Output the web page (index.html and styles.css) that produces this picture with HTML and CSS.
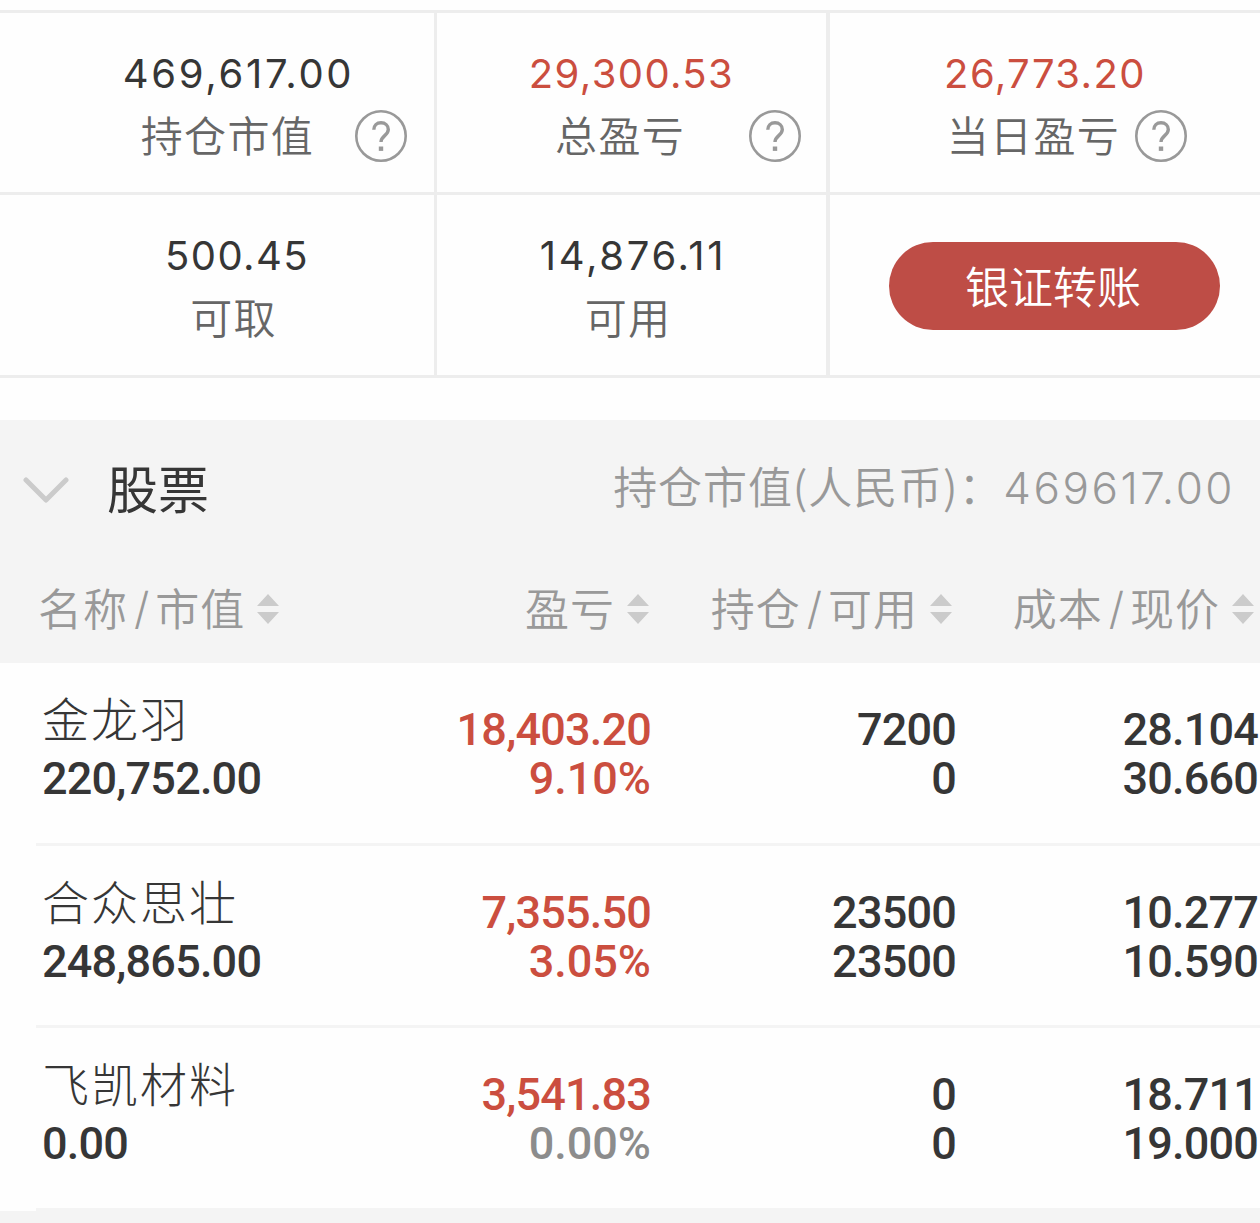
FILE: index.html
```html
<!DOCTYPE html>
<html lang="zh-CN">
  <head>
    <meta charset="UTF-8" />
    <title>持仓</title>

    <link rel="stylesheet" href="styles.css">
  </head>
  <body>
    <!-- account summary -->
    <div class="summary">
      <div class="cell cell-first">
        <div class="amount wide">469,617.00</div>
        <div class="label has-help">
          <span>持仓市值</span>
          <svg class="help" viewBox="0 0 52 52">
            <circle cx="26" cy="26" r="24.7" />
            <path d="M18.8 19.8c0-4 3-7 7.2-7s7.3 2.8 7.3 6.7c0 6-7.3 6.3-7.3 12.5" />
            <rect x="23.8" y="36.5" width="4.4" height="4.4" />
          </svg>
        </div>
      </div>
      <div class="cell cell-middle">
        <div class="amount red">29,300.53</div>
        <div class="label has-help">
          <span>总盈亏</span>
          <svg class="help" viewBox="0 0 52 52">
            <circle cx="26" cy="26" r="24.7" />
            <path d="M18.8 19.8c0-4 3-7 7.2-7s7.3 2.8 7.3 6.7c0 6-7.3 6.3-7.3 12.5" />
            <rect x="23.8" y="36.5" width="4.4" height="4.4" />
          </svg>
        </div>
      </div>
      <div class="cell cell-last">
        <div class="amount red">26,773.20</div>
        <div class="label has-help">
          <span>当日盈亏</span>
          <svg class="help" viewBox="0 0 52 52">
            <circle cx="26" cy="26" r="24.7" />
            <path d="M18.8 19.8c0-4 3-7 7.2-7s7.3 2.8 7.3 6.7c0 6-7.3 6.3-7.3 12.5" />
            <rect x="23.8" y="36.5" width="4.4" height="4.4" />
          </svg>
        </div>
      </div>
      <div class="cell cell-first">
        <div class="amount">500.45</div>
        <div class="label">可取</div>
      </div>
      <div class="cell cell-middle">
        <div class="amount wide">14,876.11</div>
        <div class="label">可用</div>
      </div>
      <div class="cell cell-last cell-button">
        <button class="transfer">银证转账</button>
      </div>
    </div>

    <!-- stock list -->
    <div class="stock-head">
      <div class="title-row">
        <svg class="arrow" viewBox="0 0 46 28">
          <path d="M3 3L23 23L43 3" />
        </svg>
        <h2>股票</h2>
        <div class="total">持仓市值(人民币)：<span class="total-num">469617.00</span></div>
      </div>
      <div class="columns">
        <div class="col">名称<i>/</i>市值<svg class="sort" viewBox="0 0 22 30"><path d="M0 12L11 0L22 12zM0 18L11 30L22 18z" /></svg></div>
        <div class="col">盈亏<svg class="sort" viewBox="0 0 22 30"><path d="M0 12L11 0L22 12zM0 18L11 30L22 18z" /></svg></div>
        <div class="col">持仓<i>/</i>可用<svg class="sort" viewBox="0 0 22 30"><path d="M0 12L11 0L22 12zM0 18L11 30L22 18z" /></svg></div>
        <div class="col">成本<i>/</i>现价<svg class="sort" viewBox="0 0 22 30"><path d="M0 12L11 0L22 12zM0 18L11 30L22 18z" /></svg></div>
      </div>
    </div>

    <div class="stocks">
      <div class="stock">
        <div class="name"><b>金龙羽</b><span>220,752.00</span></div>
        <div class="num red"><span>18,403.20</span><span class="percent">9.10%</span></div>
        <div class="num"><span>7200</span><span>0</span></div>
        <div class="num"><span>28.104</span><span>30.660</span></div>
      </div>
      <div class="stock">
        <div class="name"><b>合众思壮</b><span>248,865.00</span></div>
        <div class="num red"><span>7,355.50</span><span class="percent">3.05%</span></div>
        <div class="num"><span>23500</span><span>23500</span></div>
        <div class="num"><span>10.277</span><span>10.590</span></div>
      </div>
      <div class="stock">
        <div class="name"><b>飞凯材料</b><span>0.00</span></div>
        <div class="num red"><span>3,541.83</span><span class="percent gray">0.00%</span></div>
        <div class="num"><span>0</span><span>0</span></div>
        <div class="num"><span>18.711</span><span>19.000</span></div>
      </div>
    </div>
    <div class="bottom"></div>
  </body>
</html>
```
FILE: styles.css
```css
* {
  box-sizing: border-box;
}

body {
  margin: 0;
  padding-top: 10px;
  width: 1260px;
  height: 1223px;
  overflow: hidden;
  background-color: #fefefe;
  color: #363636;
  font-family: "Noto Sans CJK SC", sans-serif;
}

/* summary */
.summary {
  display: grid;
  grid-template-columns: 437px 393px 430px;
  grid-template-rows: 182px 183px;
  border-top: 3px solid #ededed;
}

.cell {
  padding-top: 31px;
  border-right: 4px solid #ededed;
  border-bottom: 3px solid #ededed;
  text-align: center;
}

.cell-first {
  padding-left: 40px;
  border-right-width: 3px;
}

.cell-last {
  border-right: 0;
}

.amount {
  font-family: Inter, sans-serif;
  font-size: 40px;
  line-height: 60px;
  letter-spacing: 1.4px;
}

.wide {
  padding-left: 3px;
  letter-spacing: 2.7px;
}

.label {
  font-size: 42px;
  font-weight: 350;
  line-height: 60px;
  letter-spacing: 1.3px;
  color: #666;
  padding-right: 7px;
}

.has-help {
  display: flex;
  align-items: center;
  justify-content: flex-end;
  gap: 41px;
  padding-right: 27px;
}

.cell-middle .has-help {
  gap: 64px;
  padding-right: 25px;
}

.cell-last .has-help {
  gap: 15px;
  padding-right: 73px;
}

.help {
  width: 52px;
  height: 52px;
  margin-top: 3px;
  fill: none;
  stroke: #999;
  stroke-width: 2.6;
}

.help path {
  stroke-width: 3.4;
}

.help rect {
  fill: #999;
  stroke: none;
}

.red {
  color: #cb4e3f;
}

.cell-button {
  padding: 47px 0 0 59px;
  text-align: left;
}

.transfer {
  display: block;
  width: 331px;
  height: 88px;
  border: 0;
  border-radius: 44px;
  padding: 0 3px 3px 0;
  background-color: #be4d46;
  color: #fff;
  font-family: inherit;
  font-size: 44px;
  font-weight: 350;
}

/* stock list header */
.stock-head {
  margin-top: 42px;
  height: 243px;
  background-color: #f4f4f4;
}

.title-row {
  display: flex;
  align-items: center;
  height: 136px;
  padding: 0 25px 0 23px;
}

.arrow {
  width: 46px;
  height: 28px;
  margin-top: 5px;
  fill: none;
  stroke: #cbcbcb;
  stroke-width: 5;
  stroke-linecap: round;
  stroke-linejoin: round;
}

h2 {
  margin: -3px 0 0 38px;
  font-size: 51px;
  font-weight: 400;
  line-height: 70px;
}

.total {
  margin: -6px 0 0 auto;
  font-size: 44px;
  font-weight: 350;
  letter-spacing: 0.9px;
  white-space: nowrap;
  color: #999;
}

.total-num {
  font-family: Inter, sans-serif;
  letter-spacing: 2.5px;
}

.columns {
  display: grid;
  grid-template-columns: 320px 329px 303px 302px;
  height: 107px;
  color: #999;
  font-size: 44px;
  font-weight: 350;
  letter-spacing: 1px;
}

.col {
  display: flex;
  align-items: center;
  justify-content: flex-end;
  height: 102px;
}

.col:first-child {
  justify-content: flex-start;
  padding-left: 38px;
}

.col i {
  padding: 2px 5px 0 6px;
  font-family: Inter, sans-serif;
  font-style: normal;
}

.sort {
  width: 22px;
  height: 30px;
  margin: 3px 0 0 12px;
  fill: #cbcbcb;
}

/* stock rows */
.stocks {
  padding-left: 36px;
}

.stock {
  display: grid;
  grid-template-columns: 284px 331px 305px 302px;
  height: 182.5px;
  padding-top: 28px;
  border-bottom: 3px solid #f4f4f4;
  font-family: Roboto, sans-serif;
  font-size: 45px;
  font-weight: 500;
  line-height: 49px;
  letter-spacing: -0.8px;
}

.name,
.num {
  display: flex;
  flex-direction: column;
}

.name {
  padding-left: 6px;
}

.name b {
  font-family: "Noto Sans CJK SC", sans-serif;
  font-size: 47px;
  font-weight: 300;
  letter-spacing: 2px;
  line-height: 52px;
  margin-bottom: 11px;
}

.num {
  padding-top: 14px;
  align-items: flex-end;
}

.percent {
  letter-spacing: 0;
}

.gray {
  color: #8c8c8c;
}

.bottom {
  height: 20px;
  background-color: #f4f4f4;
}
```
